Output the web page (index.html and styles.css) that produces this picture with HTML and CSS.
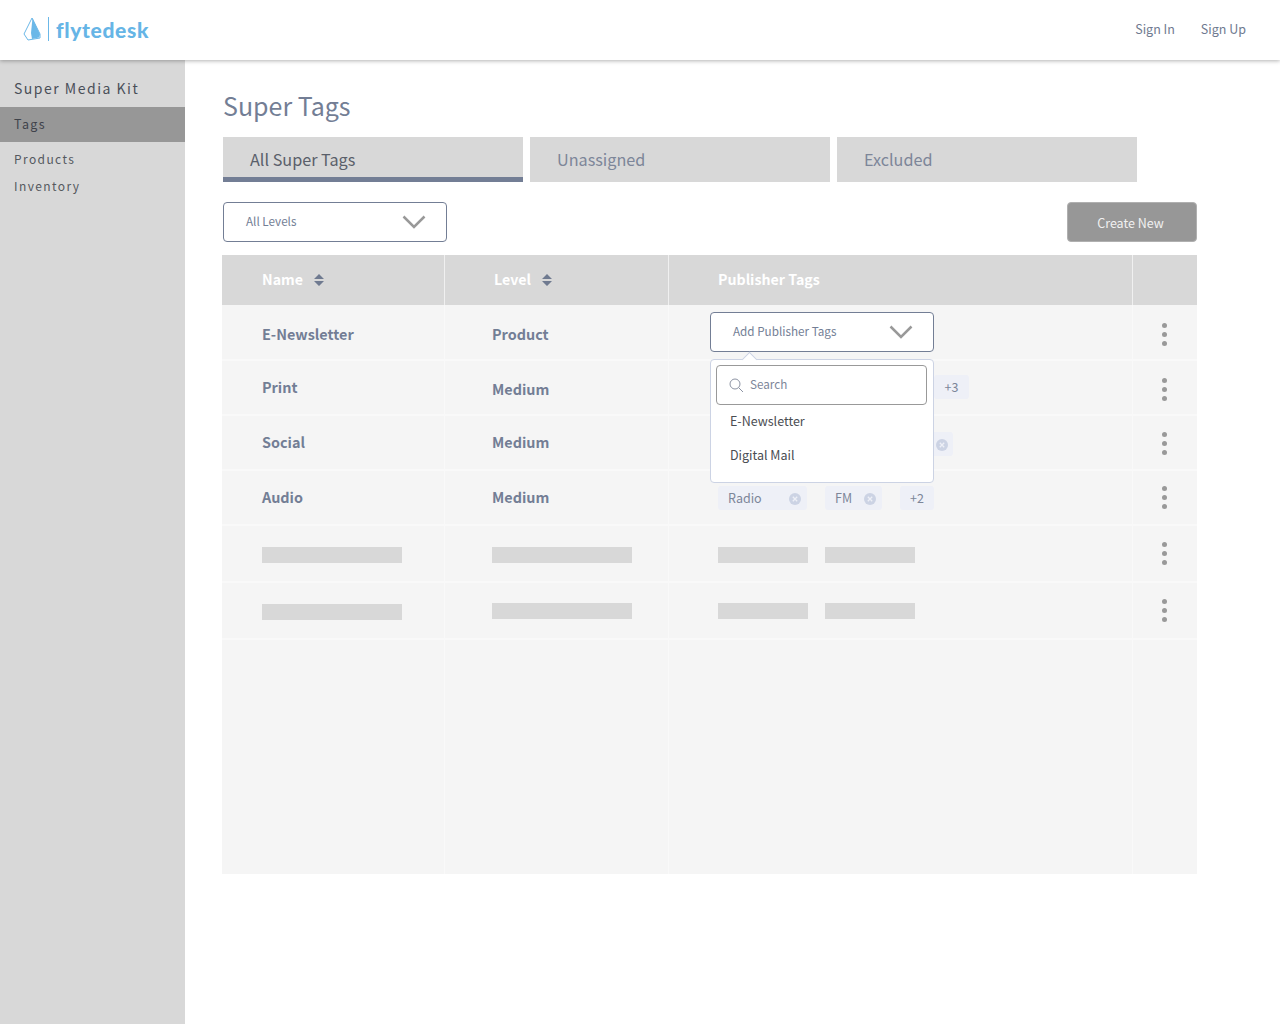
FILE: index.html
```html
<!DOCTYPE html>
<html lang="en">
<head>
<meta charset="utf-8">
<title>Super Tags</title>
<link rel="stylesheet" href="styles.css">
</head>
<body>
<header class="topbar">
  <div class="logo">
    <svg class="logo-mark" width="18" height="24" viewBox="0 0 18 24"><path d="M9 1 L1 17 L5 23 L17 21 L17 17 Z" fill="#fff" stroke="#6bb8e8" stroke-width="1"/><path d="M9.500 1 L17 17.500 L16 20.500 L9 22 L8 16 Z" fill="#6bb8e8"/></svg>
    <span class="logo-bar"></span>
    <span class="logo-text">flytedesk</span>
  </div>
  <nav class="top-links"><span>Sign In</span><span>Sign Up</span></nav>
</header>
<div class="body-row">
  <aside class="sidebar">
    <div class="side-title">Super Media Kit</div>
    <div class="side-active">Tags</div>
    <div class="side-links"><div>Products</div><div>Inventory</div></div>
  </aside>
  <main class="content">
    <h1 class="page-title">Super Tags</h1>
    <div class="tabs">
      <div class="tab tab-active">All Super Tags</div>
      <div class="tab">Unassigned</div>
      <div class="tab">Excluded</div>
    </div>
    <div class="toolbar">
      <div class="select select-level"><span>All Levels</span><svg class="chev" width="24" height="14" viewBox="0 0 24 14"><path d="M1.500 1.500 L12 12 L22.500 1.500" fill="none" stroke="#999" stroke-width="2.500"/></svg></div>
      <button class="create">Create New</button>
    </div>
    <div class="table">
      <div class="row head">
        <div class="c c1"><span class="h-name">Name</span><svg class="sort" width="10" height="14" viewBox="0 0 10 14"><path d="M5 1 L10 6 H0 Z M0 8 H10 L5 13 Z" fill="#6f7a90"/></svg></div>
        <div class="c c2"><span class="h-level">Level</span><svg class="sort" width="10" height="14" viewBox="0 0 10 14"><path d="M5 1 L10 6 H0 Z M0 8 H10 L5 13 Z" fill="#6f7a90"/></svg></div>
        <div class="c c3"><span class="h-pub">Publisher Tags</span></div>
        <div class="c c4"></div>
      </div>
      <div class="row r1">
        <div class="c c1 strong">E-Newsletter</div>
        <div class="c c2 strong">Product</div>
        <div class="c c3"></div>
        <div class="c c4"><span class="dots"><i></i><i></i><i></i></span></div>
      </div>
      <div class="row r2">
        <div class="c c1 strong up">Print</div>
        <div class="c c2 strong">Medium</div>
        <div class="c c3 tags"></div>
        <div class="c c4"><span class="dots"><i></i><i></i><i></i></span></div>
      </div>
      <div class="row r3">
        <div class="c c1 strong">Social</div>
        <div class="c c2 strong">Medium</div>
        <div class="c c3 tags"></div>
        <div class="c c4"><span class="dots"><i></i><i></i><i></i></span></div>
      </div>
      <div class="row r4">
        <div class="c c1 strong">Audio</div>
        <div class="c c2 strong">Medium</div>
        <div class="c c3 tags">
          <span class="tag tag-radio">Radio<svg class="x" width="12" height="12" viewBox="0 0 12 12"><circle cx="6" cy="6" r="6" fill="#ccd3e4"/><path d="M3.800 3.800 L8.200 8.200 M8.200 3.800 L3.800 8.200" stroke="#eef0f7" stroke-width="1.300"/></svg></span>
          <span class="tag tag-fm">FM<svg class="x" width="12" height="12" viewBox="0 0 12 12"><circle cx="6" cy="6" r="6" fill="#ccd3e4"/><path d="M3.800 3.800 L8.200 8.200 M8.200 3.800 L3.800 8.200" stroke="#eef0f7" stroke-width="1.300"/></svg></span>
          <span class="tag tag-more">+2</span>
        </div>
        <div class="c c4"><span class="dots"><i></i><i></i><i></i></span></div>
      </div>
      <div class="row r5">
        <div class="c c1"><span class="ph ph-l"></span></div>
        <div class="c c2"><span class="ph ph-l"></span></div>
        <div class="c c3 tags"><span class="ph ph-s"></span><span class="ph ph-s"></span></div>
        <div class="c c4"><span class="dots"><i></i><i></i><i></i></span></div>
      </div>
      <div class="row r6">
        <div class="c c1"><span class="ph ph-l"></span></div>
        <div class="c c2"><span class="ph ph-l"></span></div>
        <div class="c c3 tags"><span class="ph ph-s"></span><span class="ph ph-s"></span></div>
        <div class="c c4"><span class="dots"><i></i><i></i><i></i></span></div>
      </div>
      <div class="row filler">
        <div class="c c1"></div><div class="c c2"></div><div class="c c3"></div><div class="c c4"></div>
      </div>
      <div class="overlay">
        <span class="tag tag-plus3">+3</span>
        <span class="tag tag-x"><svg class="x" width="12" height="12" viewBox="0 0 12 12"><circle cx="6" cy="6" r="6" fill="#ccd3e4"/><path d="M3.800 3.800 L8.200 8.200 M8.200 3.800 L3.800 8.200" stroke="#eef0f7" stroke-width="1.300"/></svg></span>
        <div class="select select-pub"><span>Add Publisher Tags</span><svg class="chev" width="24" height="14" viewBox="0 0 24 14"><path d="M1.500 1.500 L12 12 L22.500 1.500" fill="none" stroke="#999" stroke-width="2.500"/></svg></div>
        <div class="menu">
          <span class="caret"></span>
          <div class="search"><svg width="15" height="15" viewBox="0 0 15 15"><circle cx="6" cy="6" r="5" fill="none" stroke="#8c93a3" stroke-width="1"/><path d="M9.700 9.700 L14 14" stroke="#8c93a3" stroke-width="1"/></svg><span>Search</span></div>
          <div class="opt opt1">E-Newsletter</div>
          <div class="opt opt2">Digital Mail</div>
        </div>
      </div>
    </div>
  </main>
</div>
</body>
</html>
```
FILE: styles.css
```css
* { box-sizing: border-box; }
html, body { margin: 0; height: 100%; }
body { font-family: "Noto Sans CJK JP", "Source Sans Pro", "Open Sans", sans-serif; color: #737e95; background: #fff; height: 1024px; overflow: hidden; display: flex; flex-direction: column; }

.topbar { height: 60px; flex: none; display: flex; align-items: center; justify-content: space-between; padding: 0 34px 0 23px; background: #fff; box-shadow: 0 1px 4px rgba(0,0,0,.3); position: relative; z-index: 2; }
.logo { display: flex; align-items: center; padding-bottom: 2px; }
.logo-mark { display: block; }
.logo-bar { width: 1px; height: 24px; background: #6bb8e8; margin: 0 7px; }
.logo-text { font-family: "Lato", sans-serif; font-weight: 900; font-size: 21px; line-height: 24px; letter-spacing: .65px; padding-top: 2px; color: #66b5e6; }
.top-links { display: flex; gap: 26px; font-size: 12.500px; line-height: 20px; padding-bottom: 3px; color: #6f7a90; }

.body-row { flex: 1; display: flex; min-height: 0; }
.sidebar { width: 185px; flex: none; background: #d8d8d8; }
.side-title { height: 47px; padding: 18px 14px 0; font-size: 14px; line-height: 20px; letter-spacing: 1.500px; color: #4a4f58; }
.side-active { height: 35px; padding: 7px 14px 0; background: #979797; font-size: 12.500px; line-height: 20px; letter-spacing: 1.400px; color: #3f434b; }
.side-links { padding: 3px 0 0 14px; font-size: 12px; line-height: 27px; letter-spacing: 1.400px; color: #55595f; }

.content { flex: 1; padding: 0 0 0 37px; min-width: 0; }
.page-title { margin: 27px 0 0 1px; height: 50px; font-size: 25px; font-weight: 400; line-height: 36px; color: #737e95; }
.tabs { display: flex; gap: 7px; margin-left: 1px; }
.tab { width: 300px; height: 45px; padding: 10px 27px 0; background: #d8d8d8; font-size: 16.200px; line-height: 24px; color: #7d8699; }
.tab-active { color: #5a5f6a; border-bottom: 5px solid #737e95; }

.toolbar { display: flex; justify-content: space-between; margin: 20px 83px 0 1px; height: 40px; }
.select { background: #fff; border: 1px solid #737e95; border-radius: 4px; display: flex; align-items: center; justify-content: space-between; font-size: 11.700px; line-height: 18px; color: #737e95; }
.select span { position: relative; top: -1px; }
.select-level { width: 224px; height: 40px; padding: 0 20px 0 22px; }
.chev { display: block; }
.create { width: 130px; height: 40px; border: 1px solid #b0b0b0; border-radius: 4px; background: #979797; color: #f1f1f1; font: inherit; font-size: 12.500px; padding: 1px 3px 0 0; }

.table { position: relative; width: 975px; margin-top: 13px; }
.row { display: flex; background: #f5f5f5; border-bottom: 2px solid #f9f9f9; }
.c { display: flex; align-items: center; flex: none; border-right: 1px solid #f9f9f9; }
.c1 { width: 223px; padding-left: 40px; }
.c2 { width: 224px; padding-left: 47px; }
.c3 { width: 464px; padding-left: 49px; }
.c4 { flex: 1; border-right: 0; justify-content: center; padding-right: 1px; }
.head { height: 50px; background: #d8d8d8; border-bottom: 0; color: #fff; font-weight: 700; font-size: 14.200px; }
.head .c { border-right-color: #f0f0f0; padding-bottom: 1px; }
.head .c4 { border-right: 0; }
.head span { position: relative; top: -1px; }
.h-name { margin-right: 11px; }
.h-level { margin: 0 11px 0 2px; }
.sort { display: block; }
.strong { font-weight: 700; font-size: 14.400px; color: #737e95; padding-bottom: 2px; }

.r1 { height: 56px; }
.r2 { height: 55px; }
.r3 { height: 55px; }
.r4 { height: 55px; }
.r5 { height: 57px; }
.r6 { height: 57px; }
.filler { height: 234px; border-bottom: 0; }

.r1 .c { padding-top: 4px; }
.r2 .c { padding-top: 4px; }
.r2 .up { padding-bottom: 6px; }
.r3 .c4 { padding-top: 2px; }
.r4 .tags { padding-top: 1px; }
.r5 .c { padding-top: 3px; }
.r5 .c4 { padding-top: 0; }
.r6 .c { padding-top: 1px; }
.r6 .c1 { padding-top: 3px; }
.r6 .c4 { padding-top: 0; }

.dots { display: flex; flex-direction: column; gap: 4px; }
.dots i { display: block; width: 5px; height: 5px; border-radius: 50%; background: #999; }
.ph { display: block; height: 16px; background: #d8d8d8; }
.ph-l { width: 140px; }
.ph-s { width: 90px; }
.tags { gap: 17px; }
.tag { display: inline-flex; align-items: center; height: 24px; border-radius: 3px; background: #eef0f7; font-size: 12.500px; color: #7d8699; padding-bottom: 2px; }
.tag .x { position: relative; top: 2px; }
.tag-radio { width: 89px; padding-left: 10px; padding-right: 6px; justify-content: space-between; }
.tag-fm { width: 57px; padding-left: 10px; padding-right: 6px; justify-content: space-between; margin-left: 1px; }
.tag-more { width: 34px; justify-content: center; margin-left: 1px; }

.overlay { position: absolute; inset: 0; pointer-events: none; }
.tag-plus3 { position: absolute; left: 712px; top: 120px; width: 35px; justify-content: center; }
.tag-x { position: absolute; left: 700px; top: 177px; width: 31px; justify-content: flex-end; padding-right: 5px; }
.select-pub { position: absolute; left: 488px; top: 57px; width: 224px; height: 40px; padding: 0 20px 0 22px; }
.menu { position: absolute; left: 488px; top: 104px; width: 224px; height: 124px; background: #fff; border: 1px solid #ccd3e4; border-radius: 4px; }
.caret { position: absolute; left: 33px; top: -6px; width: 11px; height: 11px; background: #fff; border-left: 1px solid #ccd3e4; border-top: 1px solid #ccd3e4; transform: rotate(45deg); }
.search { position: absolute; left: 5px; top: 5px; width: 211px; height: 40px; background: #fff; border: 1px solid #999; border-radius: 4px; display: flex; align-items: center; gap: 6px; padding-left: 12px; font-size: 11.700px; color: #7d8699; }
.search svg { display: block; }
.search span { position: relative; top: -2px; }
.opt { position: absolute; left: 19px; font-size: 12.500px; line-height: 20px; color: #4a4d52; }
.opt1 { top: 51px; }
.opt2 { top: 85px; }
```
